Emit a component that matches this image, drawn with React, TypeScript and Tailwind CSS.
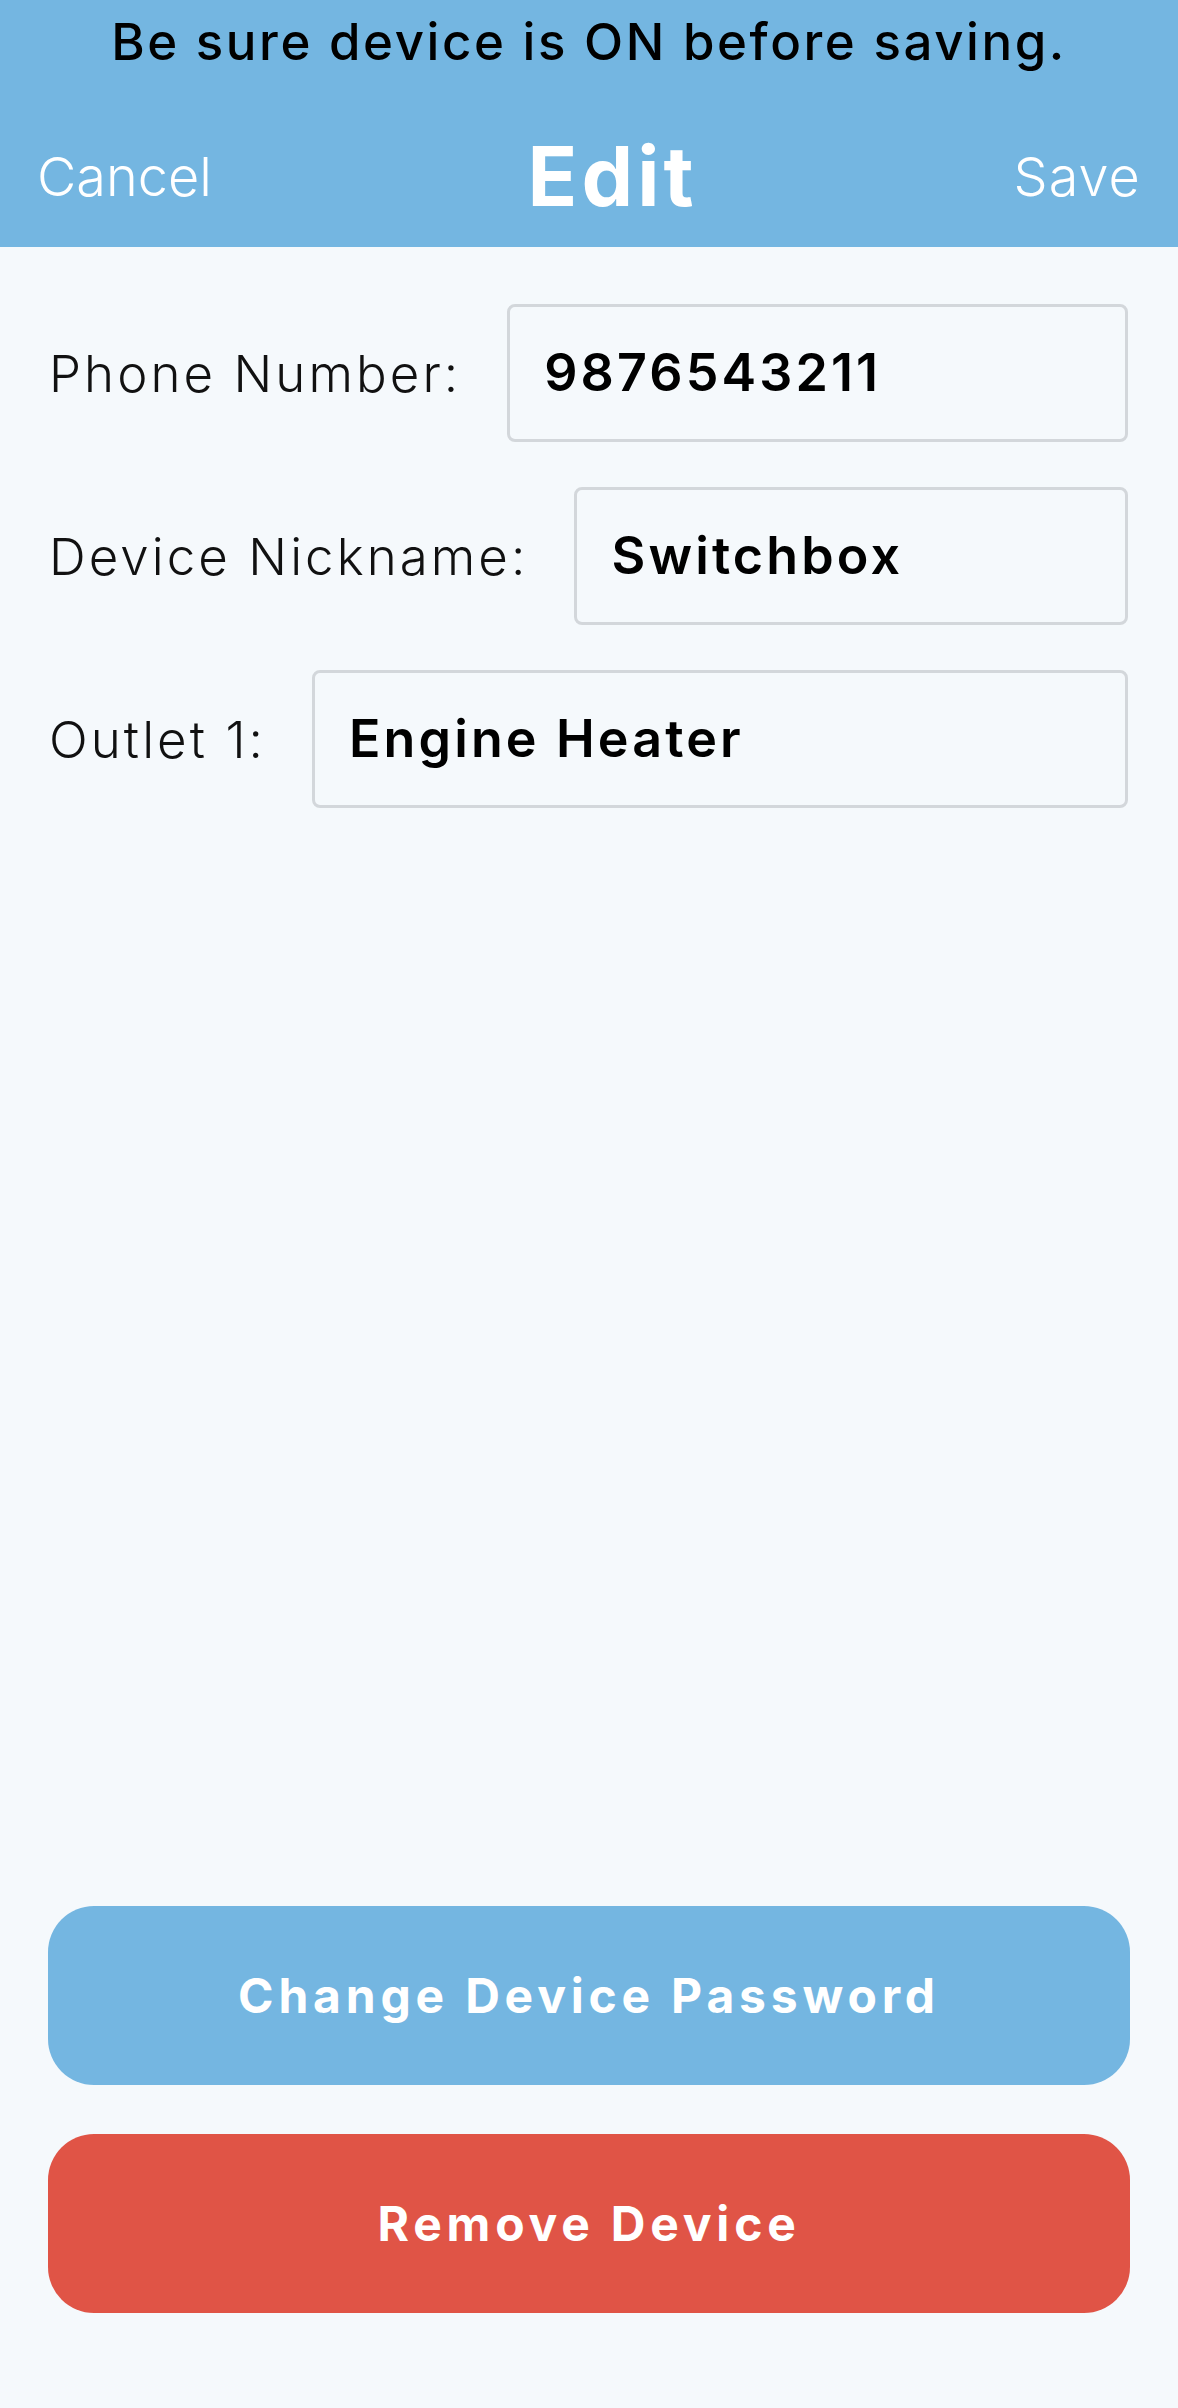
import React from "react";

const font = { fontFamily: "Inter, 'Open Sans', sans-serif" };

function Field({ label, value }: { label: string; value: string }) {
  return (
    <div className="flex items-center gap-[46px]">
      <span className="shrink-0 text-[51px] font-light text-[#111] tracking-[0.06em] leading-none">{label}</span>
      <div className="flex-1 h-[138px] rounded-[8px] border-[3px] border-[#d3d7db] bg-[#f5f9fc] flex items-center pl-[34px]">
        <span className="text-[52px] font-semibold text-black tracking-[0.06em] leading-none">{value}</span>
      </div>
    </div>
  );
}

export default function App() {
  return (
    <div className="min-h-screen flex flex-col bg-[#f5f9fc]" style={font}>
      <header className="bg-[#74b6e1] h-[247px] flex flex-col">
        <div className="h-[82px] flex items-center justify-center">
          <span className="text-[51px] font-medium text-black tracking-[0.05em] leading-none">Be sure device is ON before saving.</span>
        </div>
        <div className="mt-[35px] h-[120px] px-[37px] flex items-center justify-between text-white">
          <span className="text-[54px] font-light leading-none">Cancel</span>
          <span className="text-[82px] font-bold tracking-[0.05em] leading-none">Edit</span>
          <span className="text-[54px] font-light tracking-[0.02em] leading-none">Save</span>
        </div>
      </header>
      <main className="flex flex-col gap-[45px] pt-[57px] pl-[49px] pr-[50px]">
        <Field label="Phone Number:" value="9876543211" />
        <Field label="Device Nickname:" value="Switchbox" />
        <Field label="Outlet 1:" value="Engine Heater" />
      </main>
      <div className="flex-1" />
      <div className="flex flex-col gap-[49px] px-[48px] pb-[95px]">
        <button className="h-[179px] rounded-[46px] bg-[#74b6e1] text-white text-[48px] font-bold tracking-[0.1em]">
          Change Device Password
        </button>
        <button className="h-[179px] rounded-[46px] bg-[#e05446] text-white text-[48px] font-bold tracking-[0.1em]">
          Remove Device
        </button>
      </div>
    </div>
  );
}
